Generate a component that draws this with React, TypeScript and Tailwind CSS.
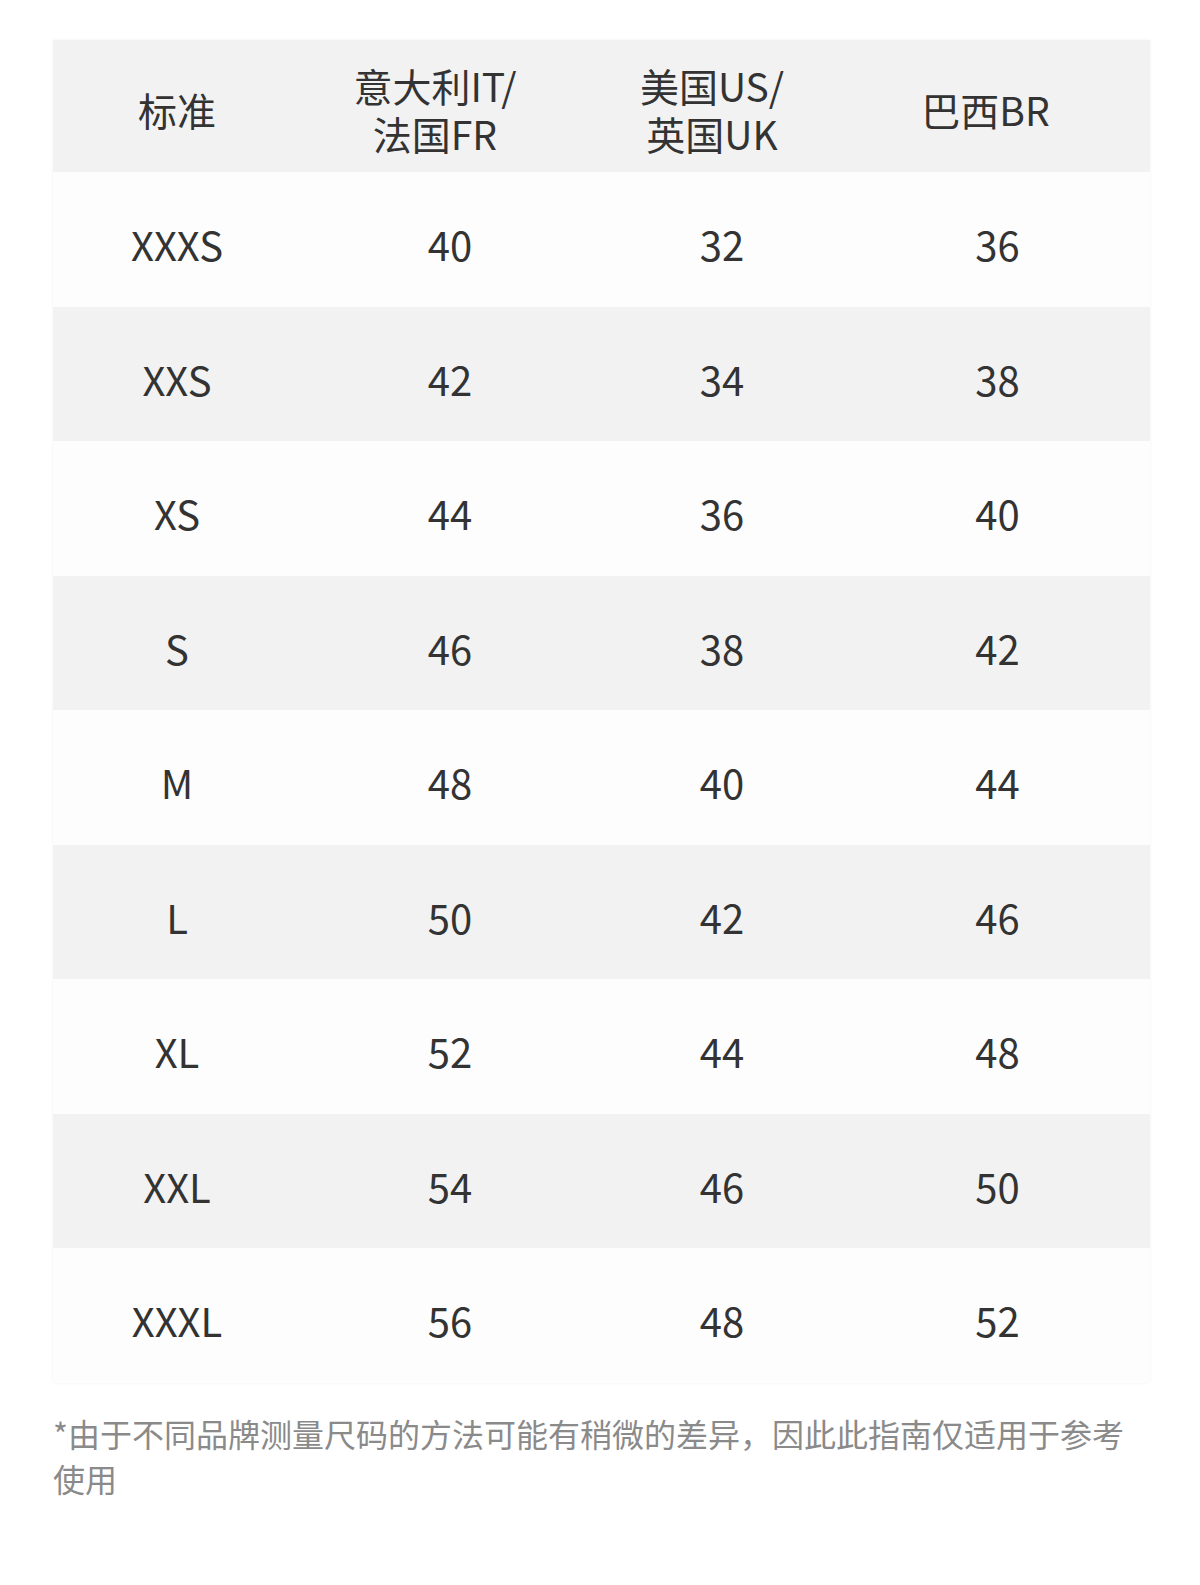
import React from "react";

const rows = [
  ["XXXS", "40", "32", "36"],
  ["XXS", "42", "34", "38"],
  ["XS", "44", "36", "40"],
  ["S", "46", "38", "42"],
  ["M", "48", "40", "44"],
  ["L", "50", "42", "46"],
  ["XL", "52", "44", "48"],
  ["XXL", "54", "46", "50"],
  ["XXXL", "56", "48", "52"],
];

const cols = "grid grid-cols-[248px_298px_246px_1fr] items-center text-center";

const SizeChart = () => {
  return (
    <div
      className="w-[1200px] min-h-[1585px] bg-white text-[#333] pt-[40px] pl-[53px]"
      style={{ fontFamily: "'Noto Sans CJK SC', 'Noto Sans', sans-serif" }}
    >
      {/* Table */}
      <div className="w-[1097px] shadow-[0_0_3px_rgba(0,0,0,0.06)]">
        <div className={`${cols} h-[132px] pt-[5px] bg-[#f2f2f2] text-[39px] leading-[48px]`}>
          <div>标准</div>
          <div className="pr-[30px]">
            意大利IT/
            <br />
            法国FR
          </div>
          <div className="pr-[20px]">
            美国US/
            <br />
            英国UK
          </div>
          <div className="pr-[24px]">巴西BR</div>
        </div>
        {rows.map((r, i) => (
          <div
            key={r[0]}
            className={`${cols} h-[134.5px] pt-[10px] text-[40px] ${
              i % 2 === 0 ? "bg-[#fdfdfd]" : "bg-[#f2f2f2]"
            }`}
          >
            {r.map((c, j) => (
              <div key={j}>{c}</div>
            ))}
          </div>
        ))}
      </div>

      {/* Note */}
      <p className="w-[1097px] mt-[28px] text-[32px] leading-[45px] text-[#8a8a8a]">
        *由于不同品牌测量尺码的方法可能有稍微的差异，因此此指南仅适用于参考使用
      </p>
    </div>
  );
};

export default SizeChart;
